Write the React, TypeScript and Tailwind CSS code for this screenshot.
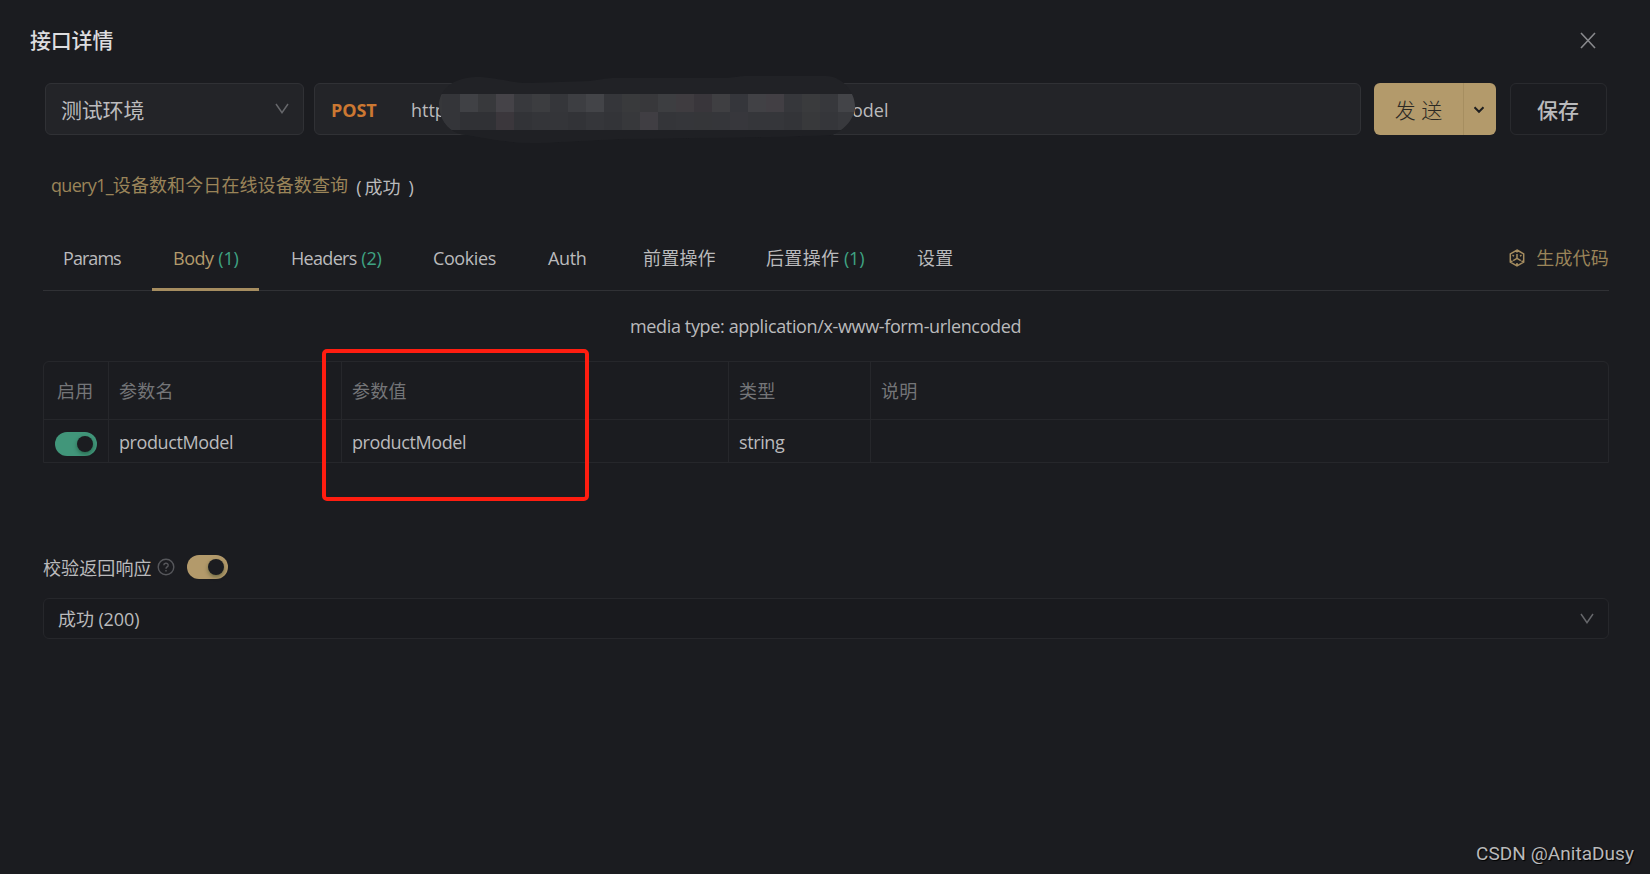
type Tab = { label: string; count?: number; style: string; text: string; active?: boolean };

const tabs: Tab[] = [
  { label: "Params", style: "w-[109px] pl-5", text: "tracking-[-0.95px]" },
  { label: "Body", count: 1, style: "w-[107px] pl-[21px]", text: "tracking-[-0.45px]", active: true },
  { label: "Headers", count: 2, style: "w-[154px] pl-[32px]", text: "tracking-[-0.68px]" },
  { label: "Cookies", style: "w-[114px] pl-5", text: "tracking-[-0.4px]" },
  { label: "Auth", style: "w-[96px] pl-[21px]", text: "tracking-[-0.35px]" },
  { label: "前置操作", style: "w-[123px] pl-5", text: "tracking-[0.2px]" },
  { label: "后置操作", count: 1, style: "w-[151px] pl-5", text: "tracking-[0.35px]" },
  { label: "设置", style: "w-[80px] pl-5", text: "tracking-[0.2px]" },
];

const mosaic: string[][] = [
  ["#343539", "#404145", "#38393c", "#454348", "#38393d", "#3c3d40", "#35363a", "#3d3e42", "#434448", "#35363a", "#393a3c", "#38383b", "#3d3e41", "#3f3c40", "#39363b", "#3f3f42", "#35363b", "#414145", "#423f44", "#36373b", "#3a3b3d", "#37383c", "#434448"],
  ["#343539", "#303135", "#303135", "#3b373c", "#323337", "#343539", "#343539", "#323337", "#35363a", "#333438", "#37383b", "#403e43", "#343539", "#35363a", "#353639", "#35363a", "#37373c", "#35363a", "#35363a", "#333438", "#38393b", "#35363a", "#38393d"],
];

function ChevronDown() {
  return (
    <svg width="14" height="12" viewBox="0 0 14 12" fill="none" stroke="#66676b" strokeWidth="1.5">
      <path d="M1 1l6 8.600L13 1" />
    </svg>
  );
}

function Switch({ color }: { color: string }) {
  return (
    <span className={`flex h-6 w-[41.5px] items-center justify-end rounded-full pr-1 ${color}`}>
      <span className="size-4 rounded-full bg-[#1b1c20] shadow-[0_2px_4px_rgba(0,35,11,0.4)]" />
    </span>
  );
}

function Mosaic() {
  return (
    <svg className="absolute -top-[10px] left-[121px]" width="420" height="70" viewBox="436 74 420 70">
      <defs>
        <clipPath id="brush">
          <path d="M439 105C439 92 450 78 476 77C498 77 508 83 530 83L590 81C604 79 606 78 616 78L725 78C738 77 740 76 746 76L826 76C842 76 855 92 855 106C855 118 845 130 832 135L770 137L620 139L540 143C500 143 478 136 460 134C446 130 439 117 439 105Z" />
        </clipPath>
      </defs>
      <g clipPath="url(#brush)">
        <rect x="436" y="70" width="424" height="80" fill="#212226" />
        <rect x="436" y="130" width="424" height="20" fill="#1f2024" />
        {mosaic.map((row, y) =>
          row.map((fill, x) => <rect key={`${x}-${y}`} x={442 + x * 18} y={94 + y * 18} width="18" height="18" fill={fill} />),
        )}
        <rect x="436" y="94" width="6" height="36" fill="#36373a" />
      </g>
    </svg>
  );
}

export default function App() {
  return (
    <div className="relative h-[874px] w-[1650px] overflow-hidden bg-[#1b1c20] pt-[22px] font-['Open_Sans','Noto_Sans_CJK_SC',sans-serif] text-[18px] leading-9 text-[#bababc]">
      <header className="flex h-9 items-center justify-between pr-[54px] pl-[30px]">
        <h1 className="text-[21px] font-medium tracking-[-0.2px] text-[#dddddf]">接口详情</h1>
        <svg width="16" height="17" viewBox="0 0 16 17" fill="none" stroke="#88898c" strokeWidth="1.600">
          <path d="M1 1l14 15M15 1L1 16" />
        </svg>
      </header>

      <div className="mt-[25px] ml-[45px] flex h-[52px]">
        <div className="flex w-[259px] items-center justify-between rounded-md border border-[#303135] bg-[#232428] pr-[14px] pl-[15px] text-[21px] tracking-[-0.2px] text-[#bcbcbe]">
          <span className="pt-[2px]">测试环境</span>
          <ChevronDown />
        </div>
        <div className="relative ml-[10px] flex w-[1047px] items-center rounded-md border border-[#303135] bg-[#232428] pt-px pl-4">
          <span className="w-[80px] text-[18px] font-bold tracking-[-0.1px] text-[#cc7832]">POST</span>
          <span className="w-[441px]">http</span>
          <span>odel</span>
          <Mosaic />
        </div>
        <div className="ml-[13px] flex w-[122px] overflow-hidden rounded-md bg-[#b39a6b] text-[#2b2924]">
          <button className="w-[90px] border-r border-[#a68e60] pt-px text-[21px] font-light">发 送</button>
          <button className="flex flex-1 items-center justify-center pr-[2px] pt-px">
            <svg width="12" height="8" viewBox="0 0 12 8" fill="none" stroke="#1f1f20" strokeWidth="2">
              <path d="M1.500 1.200L6 5.800l4.500-4.600" />
            </svg>
          </button>
        </div>
        <button className="ml-[14px] w-[97px] rounded-md border border-[#292a2e] pt-px pr-px text-[21px] font-medium">保存</button>
      </div>

      <div className="mt-[32px] ml-[51px] flex h-9">
        <span className="text-[#9a8459]"><span className="tracking-[-0.7px]">query1_</span><span className="tracking-[0.1px]">设备数和今日在线设备数查询</span></span>
        <span className="ml-2 flex pt-[2px]"><span>(</span><span className="mx-[3px]">成功</span><span className="ml-[5px]">)</span></span>
      </div>

      <div className="mt-[31px] mr-[41px] ml-[43px] flex h-[57px] border-b border-[#303135]">
        {tabs.map((t) => (
          <div key={t.label} className={`flex h-[57px] shrink-0 whitespace-pre pt-[6px] ${t.style} ${t.active ? "border-b-3 border-[#a68d60] text-[#b39a6b]" : ""}`}>
            <span className={t.text}>{t.label}</span>
            {t.count && <span className="tracking-[-0.15px] text-[#3fa383]"> ({t.count})</span>}
          </div>
        ))}
        <div className="ml-auto flex h-12 items-center gap-[11px] text-[#9a8459]">
          <svg width="16" height="18" viewBox="0 0 16 18" fill="none" stroke="#a68d60" strokeWidth="1.500">
            <path d="M8 1l6.700 3.900v8.200L8 17l-6.700-3.900V4.900zM8 9.400V5M8 9.400L4.200 11.600M8 9.400l3.800 2.200M8 1v2.500M1.300 13.100l2.200-1.300M14.700 13.100l-2.200-1.300M3.500 6.200l1.500 .9M12.500 6.200l-1.500 .9M8 14v2" />
          </svg>
          <span className="tracking-[0.2px]">生成代码</span>
        </div>
      </div>

      <p className="mt-[17px] ml-[630px] h-9 tracking-[-0.36px]">media type: application/x-www-form-urlencoded</p>

      <div className="relative mt-[17px] mr-[41px] ml-[43px] h-[102px]">
        <div className="grid h-full grid-cols-[65px_233px_387px_142px_1fr] grid-rows-[58px_42px] rounded-t-md border border-[#26272b]">
          {["启用", "参数名", "参数值", "类型", "说明"].map((h, i) => (
            <div key={h} className={`flex items-center border-b border-[#26272b] pt-px tracking-[0.3px] text-[#747578] ${i < 4 ? "border-r" : ""} ${i === 0 ? "pl-[13px]" : "pl-[10px]"}`}>{h}</div>
          ))}
          {["", "productModel", "productModel", "string", ""].map((v, i) => (
            <div key={i} className={`flex items-center border-[#26272b] tracking-[-0.4px] ${i < 4 ? "border-r" : ""} ${i === 0 ? "pt-[6px] pl-[11px]" : "pt-[2px] pl-[10px]"}`}>
              {i === 0 ? <Switch color="bg-[#41967a]" /> : <span>{v}</span>}
            </div>
          ))}
        </div>
        <div className="absolute -top-3 left-[279px] h-[152px] w-[267px] rounded-[5px] border-4 border-[#ff1d10]" />
      </div>

      <div className="mt-[86px] ml-[43px] flex h-9 items-center">
        <span className="pt-[2px] tracking-[0.1px]">校验返回响应</span>
        <svg className="ml-[5px]" width="18" height="18" viewBox="0 0 18 18" fill="none" stroke="#56575b" strokeWidth="1.400">
          <circle cx="9" cy="9" r="7.800" />
          <path d="M6.800 7.200a2.200 2 0 1 1 3.200 1.800Q9 9.500 9 10.800M9 12v1.500" />
        </svg>
        <span className="ml-[12px]"><Switch color="bg-[#b39a6b]" /></span>
      </div>

      <div className="mt-[13px] mr-[41px] ml-[43px] flex h-[41px] items-center justify-between rounded-md border border-[#26272b] bg-[#191a1e] pr-[14px] pl-[14px]">
        <span className="pt-px tracking-[-0.1px]">成功 (200)</span>
        <ChevronDown />
      </div>

      <div className="absolute right-[16px] bottom-[2px] font-['Roboto',sans-serif] text-[19px] tracking-[0.05px] text-[#b9b9ba] [text-shadow:1px_1px_1px_#000]">CSDN @AnitaDusy</div>
    </div>
  );
}
